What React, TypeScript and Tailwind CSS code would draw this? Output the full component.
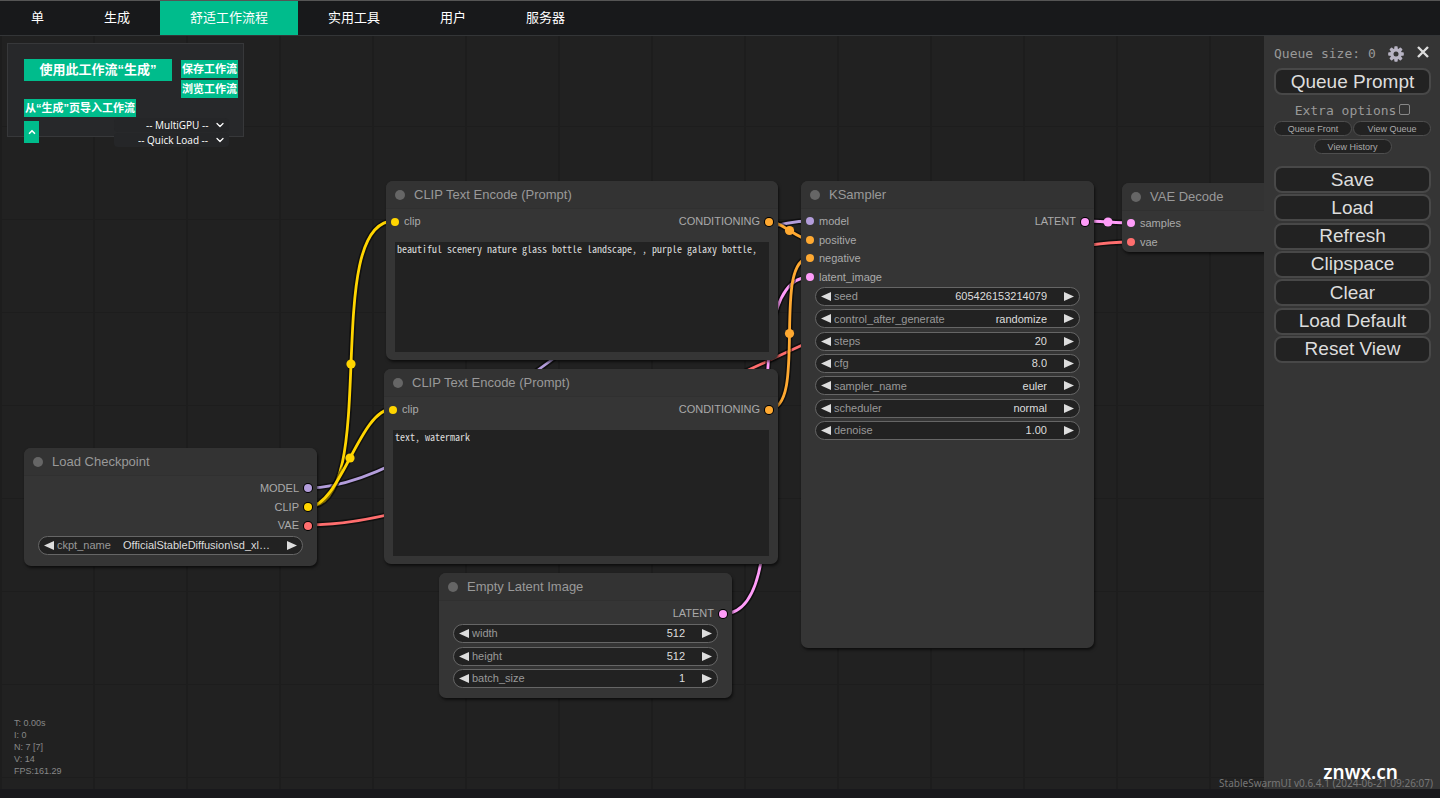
import React, { useState } from "react";
import { clsx } from "clsx";
import { ChevronDown, ChevronUp } from "lucide-react";

const TABS = ["单", "生成", "舒适工作流程", "实用工具", "用户", "服务器"];

const MENU_ACTIONS = ["Save", "Load", "Refresh", "Clipspace", "Clear", "Load Default", "Reset View"];

const MODEL = "#b39ddb";
const CLIP = "#ffd500";
const VAE = "#ff6e6e";
const CONDITIONING = "#ffa931";
const LATENT = "#ff9cf9";

type Slot = { name: string; color: string };
type WidgetData = { name: string; value: string };
type Point = [number, number];

type LinkData = { from: Point; to: Point; color: string };

// Slot centres, in canvas coordinates.
const LINKS: LinkData[] = [
  { from: [308, 452], to: [810, 185], color: MODEL },
  { from: [308, 471], to: [394, 185], color: CLIP },
  { from: [308, 471], to: [392, 373], color: CLIP },
  { from: [308, 489], to: [1131, 206], color: VAE },
  { from: [723, 578], to: [810, 241], color: LATENT },
  { from: [769, 185], to: [810, 204], color: CONDITIONING },
  { from: [769, 373], to: [810, 222], color: CONDITIONING },
  { from: [1085, 185], to: [1131, 187], color: LATENT },
];

function Link({ from, to, color }: LinkData) {
  const reach = Math.hypot(to[0] - from[0], to[1] - from[1]) / 4;
  const d = `M${from[0]} ${from[1]} C${from[0] + reach} ${from[1]} ${to[0] - reach} ${to[1]} ${to[0]} ${to[1]}`;
  return (
    <g fill="none">
      <path d={d} stroke="#000" strokeOpacity={0.5} strokeWidth={6} />
      <path d={d} stroke={color} strokeWidth={2.8} />
      <circle cx={(from[0] + to[0]) / 2} cy={(from[1] + to[1]) / 2} r={4.6} fill={color} />
    </g>
  );
}

function SlotDot({ color, output }: { color: string; output?: boolean }) {
  return (
    <span
      className={clsx("size-2 shrink-0 rounded-full", output && "ring-1 ring-black")}
      style={{ backgroundColor: color }}
    />
  );
}

function Widget({ name, value, id }: WidgetData & { id: string }) {
  const [current, setCurrent] = useState(value);
  return (
    <div className="flex h-[19px] items-center rounded-full border border-[#666] bg-[#222] px-[5px] text-[11px]">
      <button type="button" aria-label={`Previous ${name}`} className="shrink-0">
        <svg viewBox="0 0 10 9" className="h-[9px] w-[10px] fill-[#ddd]">
          <path d="M10 0v9L0 4.5z" />
        </svg>
      </button>
      <label htmlFor={id} className="ml-[3px] shrink-0 text-[#999]">
        {name}
      </label>
      <input
        id={id}
        type="text"
        value={current}
        onChange={(e) => setCurrent(e.target.value)}
        className="mr-[17px] w-0 flex-1 bg-transparent text-right text-[#ddd] outline-none"
      />
      <button type="button" aria-label={`Next ${name}`} className="shrink-0">
        <svg viewBox="0 0 10 9" className="h-[9px] w-[10px] fill-[#ddd]">
          <path d="M0 0v9l10-4.5z" />
        </svg>
      </button>
    </div>
  );
}

type NodeProps = {
  id: string;
  title: string;
  className: string;
  inputs?: Slot[];
  outputs?: Slot[];
  slotsClass: string;
  widgets?: WidgetData[];
  widgetsClass?: string;
  text?: string;
};

function Node({ id, title, className, inputs = [], outputs = [], slotsClass, widgets, widgetsClass, text }: NodeProps) {
  return (
    <section
      className={clsx(
        "absolute flex flex-col rounded-[7px] bg-[#353535] shadow-[1px_2px_3px_rgba(0,0,0,0.6)]",
        className,
      )}
    >
      <h2 className="flex h-7 shrink-0 items-center gap-[9px] rounded-t-[7px] border-b border-[#303030] bg-[#333] pl-[9px] text-[13px] text-[#999]">
        <span className="size-[10px] rounded-full bg-[#666]" />
        {title}
      </h2>
      <div className={clsx("mt-[3px] flex shrink-0 justify-between px-[5px] text-[11px] text-[#aaa]", slotsClass)}>
        <ul className="flex flex-col">
          {inputs.map((slot) => (
            <li key={slot.name} className="flex max-h-[19px] flex-1 items-center gap-[5px]">
              <SlotDot color={slot.color} />
              {slot.name}
            </li>
          ))}
        </ul>
        <ul className="flex flex-col">
          {outputs.map((slot) => (
            <li key={slot.name} className="flex max-h-[19px] flex-1 items-center justify-end gap-[5px]">
              {slot.name}
              <SlotDot color={slot.color} output />
            </li>
          ))}
        </ul>
      </div>
      {widgets && (
        <div className={clsx("mx-[14px] mt-px flex flex-col justify-between", widgetsClass)}>
          {widgets.map((w) => (
            <Widget key={w.name} id={`${id}-${w.name}`} {...w} />
          ))}
        </div>
      )}
      {text !== undefined && (
        <textarea
          aria-label={title}
          defaultValue={text}
          spellCheck={false}
          className="mx-[9px] mt-[11px] mb-2 min-h-0 flex-1 resize-none bg-[#222] px-[2px] py-px font-['Noto_Sans_Mono_CJK_SC','DejaVu_Sans_Mono',monospace] text-[10px] leading-[12px] text-[#ddd] outline-none"
        />
      )}
    </section>
  );
}

function Header() {
  const [active, setActive] = useState("舒适工作流程");
  return (
    <header className="h-9 border-t border-b border-t-[#555] border-b-[#333537] bg-[#18191b]">
      <nav className="flex h-full pl-px">
        {TABS.map((tab) => (
          <button
            key={tab}
            type="button"
            onClick={() => setActive(tab)}
            className={clsx(
              "h-full px-[30px] text-[13px] text-white",
              active === tab ? "bg-[#00bc8c]" : "bg-transparent",
            )}
          >
            {tab}
          </button>
        ))}
      </nav>
    </header>
  );
}

function QuickSelect({ label }: { label: string }) {
  return (
    <div className="flex h-[14px] items-center justify-end gap-[5px] rounded-sm bg-[#252628] pr-[3px] pl-6 text-white">
      <select
        aria-label={label}
        className="appearance-none bg-transparent font-['Open_Sans',sans-serif] text-[10px] leading-[14px] outline-none"
      >
        <option>{`-- ${label} --`}</option>
      </select>
      <ChevronDown className="pointer-events-none size-3" strokeWidth={2.5} />
    </div>
  );
}

function WorkflowPanel() {
  const small = "h-[18px] bg-[#00bc8c] px-px text-[11px] leading-[18px] font-bold text-white";
  return (
    <div className="absolute top-[7px] left-[7px] h-[94px] w-[237px] border border-[#37383a] bg-[#27282a] pt-[15px] pr-[5px] pl-4">
      <div className="flex justify-between">
        <button type="button" className="h-[22px] w-[148px] bg-[#00bc8c] text-[13px] leading-[22px] font-bold text-white">
          使用此工作流“生成”
        </button>
        <div className="flex flex-col gap-[2px] pt-px">
          <button type="button" className={small}>保存工作流</button>
          <button type="button" className={small}>浏览工作流</button>
        </div>
      </div>
      <button type="button" className={clsx(small, "mt-px block")}>从“生成”页导入工作流</button>
      <div className="mt-px flex items-start justify-between pr-[9px]">
        <button
          type="button"
          aria-label="收起"
          className="mt-[3px] grid h-[22px] w-[15px] place-items-center bg-[#00bc8c] text-white"
        >
          <ChevronUp className="size-[10px]" strokeWidth={4} />
        </button>
        <div className="flex flex-col gap-px">
          <QuickSelect label="MultiGPU" />
          <QuickSelect label="Quick Load" />
        </div>
      </div>
    </div>
  );
}

function GearIcon() {
  return (
    <svg viewBox="-8 -8 16 16" className="size-4" fill="#b8b4c4">
      {[0, 45, 90, 135].map((a) => (
        <rect key={a} x={-1.7} y={-7.8} width={3.4} height={15.6} rx={0.8} transform={`rotate(${a})`} />
      ))}
      <circle r={5.8} />
      <circle r={2.5} fill="#353535" />
    </svg>
  );
}

function QueueMenu() {
  const big = "h-[27px] w-full rounded-lg border-2 border-[#484848] bg-[#222] text-[19px] leading-[22px] text-[#ddd]";
  const tiny = "h-[15px] w-[78px] rounded-full border border-[#4e4e4e] bg-[#222] text-[9px] leading-[12px] text-[#aaa]";
  return (
    <aside className="w-44 shrink-0 bg-[#353535] pt-2 pr-[9px] pl-[10px]">
      <div className="flex h-5 items-center pr-[2px] font-['DejaVu_Sans_Mono',monospace] text-[13px] text-[#999]">
        <span className="flex-1 whitespace-nowrap">Queue size: 0</span>
        <button type="button" aria-label="Settings" className="mr-[13px]">
          <GearIcon />
        </button>
        <button type="button" aria-label="Close menu" className="mb-1 text-[#ddd]">
          <svg viewBox="0 0 12 12" className="size-3" stroke="currentColor" strokeWidth={2.4}>
            <path d="M1 1l10 10M11 1L1 11" />
          </svg>
        </button>
      </div>
      <button type="button" className={clsx(big, "mt-1")}>Queue Prompt</button>
      <label className="mt-[6px] flex h-5 items-center justify-center gap-[3px] font-['DejaVu_Sans_Mono',monospace] text-[13px] text-[#999]">
        Extra options
        <input type="checkbox" className="mb-[3px] size-[11px] appearance-none rounded-xs border border-[#888]" />
      </label>
      <div className="flex flex-wrap justify-center gap-x-px gap-y-[3px]">
        <button type="button" className={tiny}>Queue Front</button>
        <button type="button" className={tiny}>View Queue</button>
        <button type="button" className={tiny}>View History</button>
      </div>
      <div className="mt-3 flex h-[197px] flex-col justify-between">
        {MENU_ACTIONS.map((action) => (
          <button key={action} type="button" className={big}>{action}</button>
        ))}
      </div>
    </aside>
  );
}

function Stats() {
  return (
    <div className="absolute bottom-3 left-[14px] text-[9px] leading-[12px] text-[#888]">
      <p>T: 0.00s</p>
      <p>I: 0</p>
      <p>N: 7 [7]</p>
      <p>V: 14</p>
      <p>FPS:161.29</p>
    </div>
  );
}

export default function App() {
  return (
    <div className="flex min-h-screen flex-col bg-[#18191b] font-['Open_Sans','Noto_Sans_CJK_SC',sans-serif]">
      <Header />
      <div className="relative flex flex-1 font-['Liberation_Sans','Noto_Sans_CJK_SC',sans-serif]">
        <main className="relative min-w-0 flex-1 overflow-hidden bg-[#212121] bg-[linear-gradient(to_right,#1d1d1d_2px,transparent_2px),linear-gradient(to_bottom,#1d1d1d_1px,transparent_1px)] bg-[size:93px_93px] bg-[position:0px_-3px]">
          <svg className="absolute inset-0 h-full w-full">
            {LINKS.map((link, i) => (
              <Link key={i} {...link} />
            ))}
          </svg>

          <Node
            id="positive"
            title="CLIP Text Encode (Prompt)"
            className="top-[145px] left-[386px] h-[179px] w-[392px]"
            inputs={[{ name: "clip", color: CLIP }]}
            outputs={[{ name: "CONDITIONING", color: CONDITIONING }]}
            slotsClass="h-[19px]"
            text="beautiful scenery nature glass bottle landscape, , purple galaxy bottle,"
          />
          <Node
            id="negative"
            title="CLIP Text Encode (Prompt)"
            className="top-[333px] left-[384px] h-[195px] w-[394px]"
            inputs={[{ name: "clip", color: CLIP }]}
            outputs={[{ name: "CONDITIONING", color: CONDITIONING }]}
            slotsClass="h-[19px]"
            text="text, watermark"
          />
          <Node
            id="sampler"
            title="KSampler"
            className="top-[145px] left-[801px] h-[467px] w-[293px]"
            inputs={[
              { name: "model", color: MODEL },
              { name: "positive", color: CONDITIONING },
              { name: "negative", color: CONDITIONING },
              { name: "latent_image", color: LATENT },
            ]}
            outputs={[{ name: "LATENT", color: LATENT }]}
            slotsClass="h-[74px]"
            widgetsClass="h-[153px]"
            widgets={[
              { name: "seed", value: "605426153214079" },
              { name: "control_after_generate", value: "randomize" },
              { name: "steps", value: "20" },
              { name: "cfg", value: "8.0" },
              { name: "sampler_name", value: "euler" },
              { name: "scheduler", value: "normal" },
              { name: "denoise", value: "1.00" },
            ]}
          />
          <Node
            id="decode"
            title="VAE Decode"
            className="top-[147px] left-[1122px] h-[69px] w-[195px]"
            inputs={[
              { name: "samples", color: LATENT },
              { name: "vae", color: VAE },
            ]}
            slotsClass="h-[37px]"
          />
          <Node
            id="checkpoint"
            title="Load Checkpoint"
            className="top-[412px] left-[24px] h-[118px] w-[293px]"
            outputs={[
              { name: "MODEL", color: MODEL },
              { name: "CLIP", color: CLIP },
              { name: "VAE", color: VAE },
            ]}
            slotsClass="h-[56px]"
            widgets={[{ name: "ckpt_name", value: "OfficialStableDiffusion\\sd_xl…" }]}
          />
          <Node
            id="latent"
            title="Empty Latent Image"
            className="top-[537px] left-[439px] h-[125px] w-[293px]"
            outputs={[{ name: "LATENT", color: LATENT }]}
            slotsClass="h-[19px]"
            widgetsClass="h-[64px]"
            widgets={[
              { name: "width", value: "512" },
              { name: "height", value: "512" },
              { name: "batch_size", value: "1" },
            ]}
          />

          <Stats />
          <WorkflowPanel />
        </main>
        <QueueMenu />

        <p className="absolute right-[7px] bottom-0 font-['Noto_Sans',sans-serif] text-[10px] leading-[12px] text-[#777]">
          StableSwarmUI v0.6.4.1 (2024-06-21 09:26:07)
        </p>
        <p className="absolute right-[42px] bottom-[5px] font-['Noto_Sans',sans-serif] text-[19px] leading-6 font-semibold text-white">
          znwx.cn
        </p>
      </div>
      <footer className="h-[9px] bg-[#19191c]" />
    </div>
  );
}
